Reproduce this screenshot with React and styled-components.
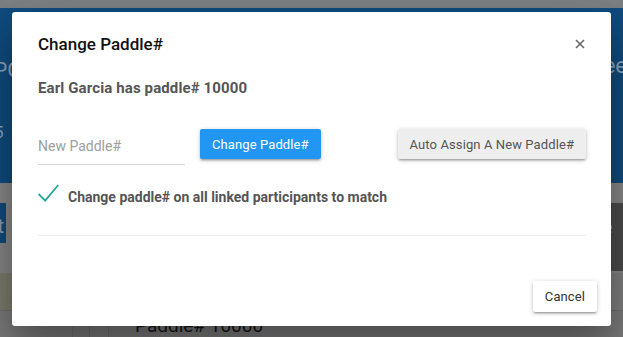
import styled, { createGlobalStyle } from "styled-components";

const GlobalStyle = createGlobalStyle`
  html, body {
    margin: 0;
    padding: 0;
    overflow: hidden;
  }
  body {
    font-family: Roboto, "Liberation Sans", sans-serif;
  }
`;

const Page = styled.div`
  position: relative;
  width: 623px;
  height: 337px;
  overflow: hidden;
  background: #7a7a7a;
  display: flex;
  flex-direction: column;
`;

const TopStrip = styled.div`
  height: 8px;
  background: #7c7f82;
`;

const Hero = styled.div`
  height: 180px;
  background: #0f4b7d;
  display: flex;
  justify-content: space-between;
  color: #8aa2b9;
`;

const HeroLeft = styled.div`
  display: flex;
  flex-direction: column;
  margin-left: -6px;
`;

const HeroTitle = styled.span`
  font-size: 21px;
  line-height: 24px;
  margin-top: 50px;
`;

const HeroNumber = styled.span`
  font-size: 17px;
  line-height: 20px;
  margin-top: 40px;
`;

const HeroRight = styled.span`
  font-size: 22px;
  line-height: 24px;
  margin-top: 46px;
  margin-right: -4px;
`;

const Gap = styled.div`
  height: ${(p) => p.$h}px;
  background: ${(p) => p.$bg};
`;

const BandRow = styled.div`
  display: flex;
  justify-content: space-between;
  align-items: flex-start;
  background: #858585;
  height: 72px;
`;

const BandCell = styled.div`
  height: ${(p) => p.$h}px;
  width: 40px;
  background: ${(p) => p.$bg};
  color: #8a9aaa;
  font-size: 21px;
  line-height: ${(p) => (p.$right ? 48 : 46)}px;
  text-align: ${(p) => (p.$right ? "right" : "left")};
  margin-left: ${(p) => (p.$right ? 0 : -34)}px;
`;

const LowerRow = styled.div`
  display: flex;
  height: 38px;
  background: #7d7d7d;
`;

const OliveCell = styled.div`
  width: 14px;
  background: #7b7b6c;
`;

const Footer = styled.div`
  flex: 1;
  display: flex;
  align-items: flex-start;
  background: #7a7a7a;
  border-top: 1px solid #6f6f6f;
`;

const Rule = styled.div`
  width: ${(p) => p.$w}px;
  align-self: stretch;
  border-right: 1px solid #707070;
`;

const FooterText = styled.span`
  margin-left: 26px;
  margin-top: 4px;
  font-size: 19px;
  line-height: 22px;
  color: #151515;
`;

const Modal = styled.div`
  position: absolute;
  left: 12px;
  top: 12px;
  width: 599px;
  height: 314px;
  background: #fff;
  border-radius: 3px;
  box-shadow: 0 16px 28px rgba(0, 0, 0, 0.22), 0 25px 55px rgba(0, 0, 0, 0.21);
  display: flex;
  flex-direction: column;
  box-sizing: border-box;
`;

const Content = styled.div`
  padding: 20px 25px 0 26px;
  display: flex;
  flex-direction: column;
`;

const Header = styled.div`
  display: flex;
  justify-content: space-between;
  align-items: flex-start;
`;

const Title = styled.h4`
  margin: 0;
  font-size: 17px;
  line-height: 24px;
  font-weight: 500;
  color: #111;
`;

const Close = styled.button`
  border: 0;
  background: none;
  padding: 0;
  margin: 7px 1px 0 0;
  width: 10px;
  height: 10px;
  display: flex;
  cursor: pointer;
`;

const Owner = styled.p`
  margin: 22px 0 0;
  font-size: 15px;
  line-height: 20px;
  font-weight: 700;
  letter-spacing: 0.12px;
  color: #555;
`;

const ActionRow = styled.div`
  display: flex;
  align-items: flex-start;
  margin-top: 22px;
`;

const PaddleInput = styled.input`
  width: 147px;
  height: 45px;
  box-sizing: border-box;
  border: 0;
  border-bottom: 1px solid #d6d6d6;
  outline: none;
  padding: 7px 0 0;
  font-family: Roboto, "Liberation Sans", sans-serif;
  font-size: 14px;
  color: #333;
  &::placeholder {
    color: #9e9e9e;
  }
`;

const Button = styled.button`
  height: 30px;
  margin-top: 9px;
  padding: 0 12px;
  border: 0;
  border-radius: 2px;
  font-family: Roboto, "Liberation Sans", sans-serif;
  font-size: 13px;
  letter-spacing: 0.1px;
  white-space: nowrap;
  cursor: pointer;
  background: ${(p) => (p.$primary ? "#2196f3" : "#eeeeee")};
  color: ${(p) => (p.$primary ? "#fff" : "#555")};
  box-shadow: 0 2px 2px 0 rgba(0, 0, 0, 0.14), 0 3px 1px -2px rgba(0, 0, 0, 0.12),
    0 1px 5px 0 rgba(0, 0, 0, 0.2);
`;

const Spacer = styled.div`
  width: ${(p) => p.$w || 0}px;
  flex: ${(p) => (p.$grow ? 1 : "none")};
`;

const CheckRow = styled.label`
  display: flex;
  align-items: flex-start;
  margin-top: 19px;
  cursor: pointer;
`;

const CheckLabel = styled.span`
  margin-left: 9px;
  font-size: 14px;
  line-height: 20px;
  font-weight: 700;
  color: #555;
  margin-top: 3px;
`;

const Divider = styled.hr`
  margin: 28px 0 0;
  border: 0;
  border-top: 1px solid #eaeaea;
`;

const ModalFooter = styled.div`
  margin-top: auto;
  display: flex;
  justify-content: flex-end;
  padding: 0 14px 14px 0;
`;

const FlatButton = styled(Button)`
  background: #fff;
  color: #333;
  height: 31px;
  margin-top: 0;
`;

function CheckIcon() {
  return (
    <svg width="21" height="18" viewBox="0 0 21 18">
      <polyline
        points="0.6,10 7.2,16.6 20.2,1"
        fill="none"
        stroke="#26a69a"
        strokeWidth="1.8"
      />
    </svg>
  );
}

function CloseIcon() {
  return (
    <svg width="10" height="10" viewBox="0 0 10 10">
      <path d="M1 1 L9 9 M9 1 L1 9" stroke="#666" strokeWidth="1.6" />
    </svg>
  );
}

export default function App() {
  return (
    <>
      <GlobalStyle />
      <Page>
        <TopStrip />
        <Hero>
          <HeroLeft>
            <HeroTitle>PC</HeroTitle>
            <HeroNumber>5</HeroNumber>
          </HeroLeft>
          <HeroRight>ee</HeroRight>
        </Hero>
        <Gap $h={20} $bg="#878787" />
        <BandRow>
          <BandCell $h={40} $bg="#134a78">
            &nbsp;&nbsp;&nbsp;&nbsp;&nbsp;&nbsp;t
          </BandCell>
          <BandCell $h={68} $bg="#4b4b4b" $right>
            e&nbsp;&nbsp;
          </BandCell>
        </BandRow>
        <LowerRow>
          <OliveCell />
        </LowerRow>
        <Footer>
          <Rule $w={72} />
          <Rule $w={16} />
          <Rule $w={18} />
          <FooterText>Paddle# 10000</FooterText>
        </Footer>

        <Modal>
          <Content>
            <Header>
              <Title>Change Paddle#</Title>
              <Close aria-label="Close">
                <CloseIcon />
              </Close>
            </Header>
            <Owner>Earl Garcia has paddle# 10000</Owner>
            <ActionRow>
              <PaddleInput placeholder="New Paddle#" />
              <Spacer $w={15} />
              <Button $primary>Change Paddle#</Button>
              <Spacer $grow />
              <Button>Auto Assign A New Paddle#</Button>
            </ActionRow>
            <CheckRow>
              <CheckIcon />
              <CheckLabel>Change paddle# on all linked participants to match</CheckLabel>
            </CheckRow>
            <Divider />
          </Content>
          <ModalFooter>
            <FlatButton>Cancel</FlatButton>
          </ModalFooter>
        </Modal>
      </Page>
    </>
  );
}
